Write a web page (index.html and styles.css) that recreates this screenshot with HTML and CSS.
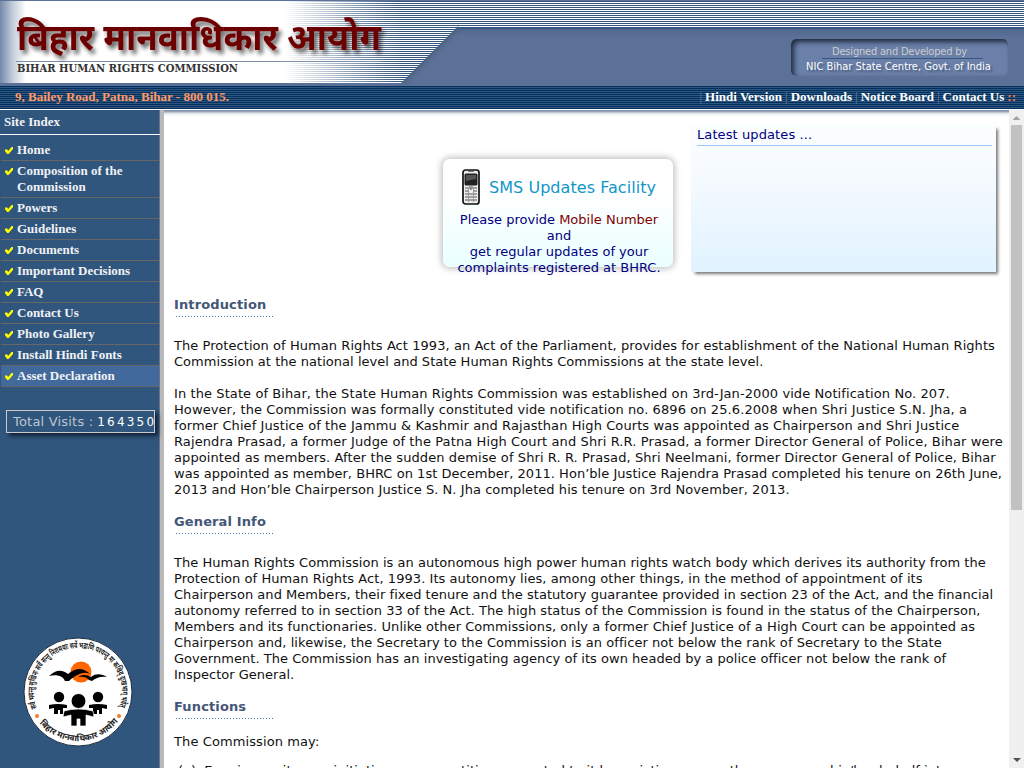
FILE: index.html
```html
<!DOCTYPE html>
<html lang="en">
<head>
<meta charset="utf-8">
<title>Bihar Human Rights Commission</title>
<link rel="stylesheet" href="styles.css">
</head>
<body>
<header class="banner">
  <svg class="brand" width="460" height="86" viewBox="0 0 460 86">
    <defs>
      <linearGradient id="edge"><stop offset="0" stop-color="#7388aa"/><stop offset=".5" stop-color="#c4cedb"/><stop offset="1" stop-color="#fff"/></linearGradient>
      <linearGradient id="fade"><stop offset="0" stop-color="#fff"/><stop offset="1" stop-color="#fff" stop-opacity="0"/></linearGradient>
      <pattern id="lines" width="4" height="2" patternUnits="userSpaceOnUse"><rect width="4" height="2" fill="#fff"/><rect y="1" width="4" height="1" fill="#36577f"/></pattern>
      <filter id="shade" x="-10%" y="-30%" width="120%" height="180%"><feDropShadow dx="3" dy="4" stdDeviation="2" flood-opacity=".6"/></filter>
      <filter id="soft"><feGaussianBlur stdDeviation="2"/></filter>
    </defs>
    <path d="M457 27L401 83" stroke="#4d6487" stroke-width="7" filter="url(#soft)"/>
    <path d="M0 1H457V27L401 83H0Z" fill="url(#lines)"/>
    <path d="M0 1H285V83H0Z" fill="#fff"/>
    <path d="M285 1H400V83H285Z" fill="url(#fade)"/>
    <path d="M0 1H26V83H0Z" fill="url(#edge)"/>
    <path d="M16 61.5H380" stroke="#7f8fa9"/>
    <text class="brand-hi" x="17" y="50" textLength="364" lengthAdjust="spacingAndGlyphs" filter="url(#shade)">बिहार मानवाधिकार आयोग</text>
    <text class="brand-en" x="17" y="72" textLength="221" lengthAdjust="spacingAndGlyphs">BIHAR HUMAN RIGHTS COMMISSION</text>
  </svg>
  <div class="credit"><span class="credit-by">Designed and Developed by</span><span class="credit-name">NIC Bihar State Centre, Govt. of India</span></div>
</header>
<div class="topbar">
  <div class="address">9, Bailey Road, Patna, Bihar - 800 015.</div>
  <nav class="links"><i>|</i><a>Hindi Version</a><i>|</i><a>Downloads</a><i>|</i><a>Notice Board</a><i>|</i><a>Contact Us</a><b>::</b></nav>
</div>
<div class="page">
  <aside class="sidebar">
    <h2 class="side-title">Site Index</h2>
    <ul class="menu">
      <li>Home</li><li>Composition of the Commission</li><li>Powers</li><li>Guidelines</li><li>Documents</li><li>Important Decisions</li><li>FAQ</li><li>Contact Us</li><li>Photo Gallery</li><li>Install Hindi Fonts</li><li class="active">Asset Declaration</li>
    </ul>
    <div class="visits"><span class="wide">Total Visits :</span><span class="count">164350</span></div>
    <svg class="seal" width="110" height="110" viewBox="0 0 110 110">
      <defs><path id="upper" d="M14 71A44 44 0 1 1 96 71"/><path id="lower" d="M14 83A50.5 50.5 0 0 0 96 83"/></defs>
      <circle cx="55" cy="55" r="54" fill="#fff" stroke="#1b2b40"/>
      <text class="seal-text"><textPath href="#upper" textLength="169" lengthAdjust="spacingAndGlyphs">सर्व भवन्तु सुखिनः सर्वे सन्तु निरामयाः सर्वे भद्राणि पश्यन्तु मा कश्चिद् दुःखभाग् भवेत्</textPath></text>
      <text class="seal-text seal-name"><textPath href="#lower" startOffset="4" textLength="90" lengthAdjust="spacingAndGlyphs">बिहार मानवाधिकार आयोग</textPath></text>
      <circle cx="14" cy="79" r="2" fill="#f47b20"/><circle cx="96" cy="79" r="2" fill="#f47b20"/>
      <circle cx="58" cy="35" r="10.5" fill="#ff6700"/>
      <path d="M26 39C33 33 38 32 45 37C54 30 60 31 67 37C61 34 54 37 46 44L42 44C40 39 34 37 26 39Z"/>
      <path d="M55 40C60 37 64 38 68 40C73 36 79 37 84 40C77 39 73 41 69 44L66 43C64 40 60 39 55 40Z"/>
      <circle cx="36" cy="60" r="5.200"/><circle cx="75" cy="60" r="5.200"/>
      <path d="M26 68Q35 66 44 68V71L40 71V77H37V73H35V77H31V71L26 72ZM66 68Q75 66 84 68V72L79 71V77H76V73H74V77H70V71L66 71Z"/>
      <circle cx="55.500" cy="64" r="7.500" stroke="#fff"/>
      <path d="M41 74Q55 70 70 74L71 80L63 78V89H57V82H54V89H48V78L40 80Z" stroke="#fff" stroke-width=".7"/>
    </svg>
  </aside>
  <main class="content">
    <div class="cards">
      <section class="sms">
        <div class="sms-head">
          <svg width="18" height="36" viewBox="0 0 18 36"><rect x="1" y="1" width="16" height="34" rx="2.500" fill="#eee" stroke="#111" stroke-width="1.700"/><path d="M6 2.500H12" stroke="#777"/><rect x="2.500" y="4.500" width="13" height="12" rx="1.500" fill="#222"/><path d="M4 6H14V10L4 12Z" fill="#555"/><path d="M3 19H7M11 19H15M8 17V20H10V17M3 22H7M11 22H15M3 25H15M3 28H15M3 31H15" stroke="#555" fill="none"/><path d="M6.500 20V33M11.500 20V33" stroke="#999"/></svg>
          <span>SMS Updates Facility</span>
        </div>
        <p>Please provide <em>Mobile Number</em> and<br>get regular updates of your<br>complaints registered at BHRC.</p>
      </section>
      <section class="updates"><h3>Latest updates ...</h3></section>
    </div>
    <h4>Introduction</h4>
    <p class="lead"><span class="loose">The Protection of Human Rights Act 1993, an Act of the Parliament, provides for establishment of the National Human Rights</span><br><span class="snug">Commission at the national level and State Human Rights Commissions at the state level.</span></p>
    <p class="para"><span class="wide">In the State of Bihar, the State Human Rights Commission was established on 3rd-Jan-2000 vide Notification No. 207.<br>However, the Commission was formally constituted vide notification no. 6896 on 25.6.2008 when Shri Justice S.N. Jha, a<br>former Chief Justice of the Jammu &amp; Kashmir and Rajasthan High Courts was appointed as Chairperson and Shri Justice</span><br><span class="widest">Rajendra Prasad, a former Judge of the Patna High Court and Shri R.R. Prasad, a former Director General of Police, Bihar were</span><br><span class="wide">appointed as members. After the sudden demise of Shri R. R. Prasad, Shri Neelmani, former Director General of Police, Bihar</span><br><span class="snug">was appointed as member, BHRC on 1st December, 2011. Hon’ble Justice Rajendra Prasad completed his tenure on 26th June,</span><br><span class="loose">2013 and Hon’ble Chairperson Justice S. N. Jha completed his tenure on 3rd November, 2013.</span></p>
    <h4>General Info</h4>
    <p class="lead"><span class="snug">The Human Rights Commission is an autonomous high power human rights watch body which derives its authority from the</span><br><span class="loose">Protection of Human Rights Act, 1993. Its autonomy lies, among other things, in the method of appointment of its</span><br><span class="snug">Chairperson and Members, their fixed tenure and the statutory guarantee provided in section 23 of the Act, and the financial</span><br><span class="loose">autonomy referred to in section 33 of the Act. The high status of the Commission is found in the status of the Chairperson,<br>Members and its functionaries. Unlike other Commissions, only a former Chief Justice of a High Court can be appointed as<br>Chairperson and, likewise, the Secretary to the Commission is an officer not below the rank of Secretary to the State</span><br><span class="snug">Government. The Commission has an investigating agency of its own headed by a police officer not below the rank of</span><br>Inspector General.</p>
    <h4>Functions</h4>
    <p class="para may">The Commission may:</p>
    <div class="item"><span>(a)</span><span class="snug">Enquire, on its own initiative or on a petition presented to it by a victim or any other person on his/her behalf into</span></div>
  </main>
  <div class="scrollbar"><svg width="15" height="15"><path d="M3.500 10L7.500 6L11.500 10Z" fill="#a3a3a3"/></svg><div class="thumb"></div><svg class="down" width="15" height="15"><path d="M4 5L8 9L12 5Z" fill="#505050"/></svg></div>
</div>
</body>
</html>
```
FILE: styles.css
```css
* { box-sizing: border-box; }
body { margin: 0; width: 1024px; height: 768px; overflow: hidden; display: flex; flex-direction: column; background: #fff; font: 13px/16px "DejaVu Sans", sans-serif; color: #111; }
h2, h3, h4, p, ul { margin: 0; padding: 0; }
.snug { letter-spacing: .035px; }
.loose { letter-spacing: .06px; }
.wide { letter-spacing: .09px; }
.widest { letter-spacing: .105px; }
.banner { height: 86px; flex: none; display: flex; justify-content: space-between; background: linear-gradient(#5c7197, #5c7197) 0 0 / 100% 1px no-repeat, linear-gradient(#36577f 0 2px, #50678b 2px, #5c7197 10px) 0 27px / 100% 59px no-repeat, repeating-linear-gradient(#fff 0 1px, #36577f 1px 2px); }
.brand { display: block; }
.brand-hi { font: bold 37px "Noto Sans Devanagari", "Lohit Devanagari", "Noto Sans", sans-serif; fill: #6c0000; }
.brand-en { font: bold 11px "DejaVu Serif", serif; fill: #333; }
.credit { width: 217px; height: 37px; margin: 39px 16px 0 0; border-radius: 5px; background: linear-gradient(#36577f, #36577f) 31px 19px / 161px 1px no-repeat, #6b80a8; box-shadow: inset 3px 3px 5px #202b40; display: flex; flex-direction: column; align-items: center; padding-top: 5px; font: 11px/15px "DejaVu Sans Condensed", "DejaVu Sans", sans-serif; }
.credit-by { color: #ccc; letter-spacing: -.2px; }
.credit-name { color: #fff; text-shadow: 2px 2px 2px #46597d; margin-left: -2px; }
.topbar { height: 24px; flex: none; display: flex; justify-content: space-between; padding: 3px 8px 0 15px; border-bottom: 1px solid #fff; background: repeating-linear-gradient(#00305f 0 1px, #31567d 1px 2px); font: bold 13px/15px "Liberation Serif", serif; }
.address { color: #ff9966; }
.links { color: #fff; display: flex; gap: 3px; }
.links i { font-style: normal; font-weight: normal; color: #66809f; }
.links b { color: #f47b4a; }
.page { flex: 1; min-height: 0; display: flex; }
.sidebar { width: 164px; flex: none; background: #31567d; border-right: 4px solid #b9b9b9; box-shadow: inset -1px 0 #66758a; display: flex; flex-direction: column; font: bold 13px/16px "Liberation Serif", serif; color: #f0f2f5; }
.side-title { font: inherit; height: 25px; padding: 4px 4px 0; border-bottom: 1px solid #fff; }
.menu { list-style: none; padding: 5px 1px 0; }
.menu li { position: relative; padding: 2px 20px 2px 16px; border-bottom: 1px solid #666; }
.menu li::before { content: ""; position: absolute; left: 4px; top: 7px; width: 8px; height: 7px; background: #ff0; clip-path: polygon(0 35%, 28% 35%, 40% 58%, 82% 0, 100% 0, 100% 30%, 45% 100%, 28% 100%, 0 60%); }
.menu .active { background: #41699b; }
.visits { width: 149px; height: 23px; margin: 23px 0 0 6px; border: 1px solid #ccc; box-shadow: 3px 3px 4px #10213a; display: flex; gap: 4px; padding: 3px 0 0 6px; font: 13px/16px "DejaVu Sans", sans-serif; color: #bcc5d1; white-space: nowrap; }
.visits .wide { letter-spacing: .2px; }
.count { color: #fff; font-size: 12px; letter-spacing: 2.2px; }
.seal { margin: 204px 0 0 23px; }
.seal-text { font: bold 8.5px "Noto Sans Devanagari", "Lohit Devanagari", sans-serif; fill: #222; }
.content { flex: 1; min-width: 0; overflow: hidden; padding: 15px 0 0 10px; background: linear-gradient(#7187a8, #a3adba 2px, #dde1e8 3px, #fff 6px) 0 0 / 100% 6px no-repeat; }
.cards { display: flex; height: 172px; }
.sms { width: 230px; height: 108px; margin: 34px 0 0 269px; border-radius: 7px; background: linear-gradient(#fff 30%, #eaffff); box-shadow: 0 0 6px 2px #c4c4c4; padding: 10px 10px 0 12px; text-align: center; color: #000080; white-space: nowrap; }
.sms-head { display: flex; gap: 9px; align-items: center; padding-left: 7px; margin-bottom: 7px; font-size: 16px; letter-spacing: .05px; color: #1296c8; }
.sms-head span { padding-top: 2px; }
.sms p { width: 208px; white-space: normal; }
.sms em { font-style: normal; color: #800000; }
.updates { width: 305px; height: 147px; margin-left: 18px; padding: 2px 4px 0 6px; background: linear-gradient(#fbfeff, #f5faff 35%, #e0f3ff); box-shadow: 3px 3px 3px -1px #777; }
.updates h3 { font: inherit; letter-spacing: .1px; color: #000080; height: 19px; border-bottom: 1px solid #99c8f0; }
.content h4 { height: 21px; font-size: 13px; line-height: 16px; letter-spacing: .13px; color: #445677; background: repeating-linear-gradient(90deg, #4572a0 0 1px, transparent 1px 3px) 2px 19px / 98px 1px no-repeat; }
.lead { padding: 20px 0 16px; white-space: nowrap; }
.para { padding: 0 0 16px; white-space: nowrap; }
.may { padding-top: 14px; padding-bottom: 13px; letter-spacing: .1px; }
.item { display: flex; gap: 8px; padding-left: 4px; white-space: nowrap; }
.scrollbar { width: 15px; flex: none; background: #f0f0f0; display: flex; flex-direction: column; }
.scrollbar svg { flex: none; }
.thumb { width: 11px; height: 385px; margin-left: 2px; background: #c1c1c1; }
.down { margin-top: auto; }
```
